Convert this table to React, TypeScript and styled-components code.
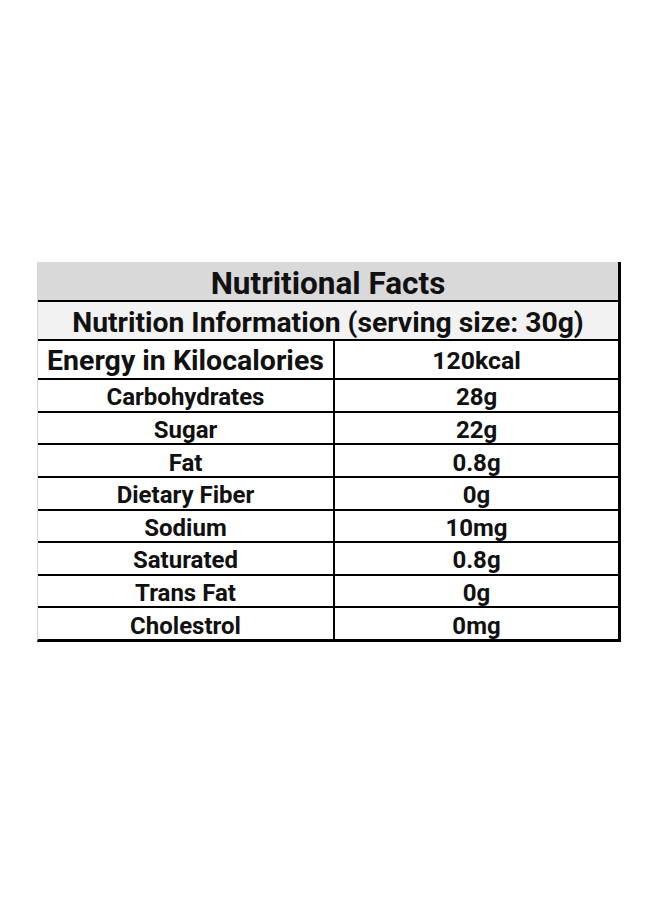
import React from "react";
import styled, { createGlobalStyle } from "styled-components";

const Global = createGlobalStyle`
  html, body { margin: 0; padding: 0; background: #fff; }
  body { font-family: Roboto, "Liberation Sans", Arial, sans-serif; }
`;

const Page = styled.div`
  width: 660px;
  height: 904px;
  box-sizing: border-box;
  padding: 262px 39px 0 37px;
`;

const Table = styled.div`
  display: grid;
  grid-template-columns: 295px 2px 1fr;
  border-left: 1px solid #d4d4d4;
  border-right: 3px solid #000;
  border-bottom: 3px solid #000;
  color: #111;
  font-weight: 700;
`;

const Banner = styled.div<{ $bg: string; $h: number; $size: number }>`
  grid-column: 1 / -1;
  box-sizing: content-box;
  height: ${(p) => p.$h - 5}px;
  padding-top: 5px;
  background: ${(p) => p.$bg};
  display: flex;
  align-items: center;
  justify-content: center;
  font-size: ${(p) => p.$size}px;
  line-height: 1;
  border-bottom: 2px solid #000;
`;

const Cell = styled.div<{ $h: number; $size: number; $last?: boolean }>`
  box-sizing: content-box;
  height: ${(p) => p.$h - 4}px;
  padding-top: 4px;
  display: flex;
  align-items: center;
  justify-content: center;
  font-size: ${(p) => p.$size}px;
  line-height: 1;
  border-bottom: ${(p) => (p.$last ? "none" : "2px solid #000")};
`;

const Divider = styled.div<{ $last?: boolean }>`
  background: #000;
  border-bottom: ${(p) => (p.$last ? "none" : "2px solid #000")};
`;

const rows: [string, string][] = [
  ["Carbohydrates", "28g"],
  ["Sugar", "22g"],
  ["Fat", "0.8g"],
  ["Dietary Fiber", "0g"],
  ["Sodium", "10mg"],
  ["Saturated", "0.8g"],
  ["Trans Fat", "0g"],
  ["Cholestrol", "0mg"],
];

export default function App() {
  return (
    <Page>
      <Global />
      <Table>
        <Banner $bg="#d9d9d9" $h={38} $size={31.5}>
          Nutritional Facts
        </Banner>
        <Banner $bg="#f2f2f2" $h={37} $size={28.3}>
          Nutrition Information (serving size: 30g)
        </Banner>
        <Cell $h={37} $size={28.5}>Energy in Kilocalories</Cell>
        <Divider />
        <Cell $h={37} $size={24.8}>120kcal</Cell>
        {rows.map(([k, v], i) => {
          const last = i === rows.length - 1;
          const h = i % 2 === 0 ? 30.5 : 30.75;
          return (
            <React.Fragment key={k}>
              <Cell $h={h} $size={24} $last={last}>{k}</Cell>
              <Divider $last={last} />
              <Cell $h={h} $size={24} $last={last}>{v}</Cell>
            </React.Fragment>
          );
        })}
      </Table>
    </Page>
  );
}
